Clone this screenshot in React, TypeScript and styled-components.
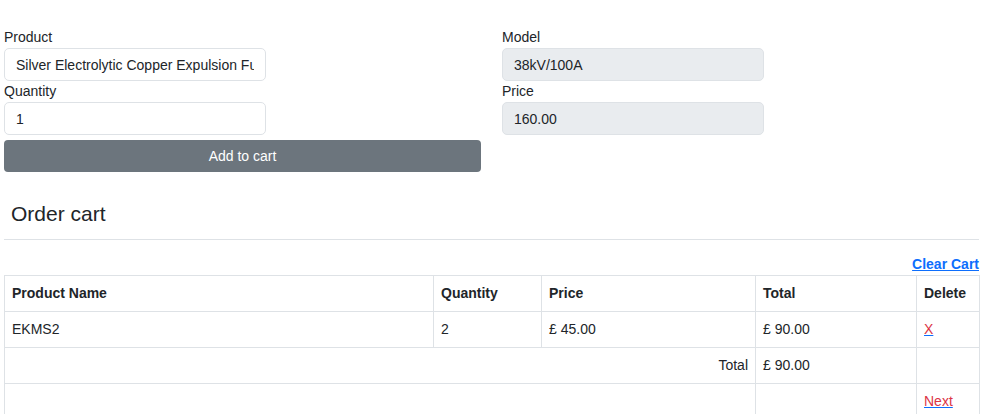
import React from "react";
import styled, { createGlobalStyle } from "styled-components";

const GlobalStyle = createGlobalStyle`
  html, body {
    margin: 0;
    padding: 0;
    background: #ffffff;
    font-family: "Liberation Sans", Arial, sans-serif;
    font-size: 14px;
    line-height: 21px;
    color: #212529;
  }
  * { box-sizing: border-box; }
`;

const Page = styled.div`
  width: 975px;
  margin-left: 4px;
  padding-top: 27px;
`;

const FormGrid = styled.div`
  display: grid;
  grid-template-columns: 477px 1fr;
  column-gap: 21px;
`;

const Column = styled.div`
  display: flex;
  flex-direction: column;
  align-items: flex-start;
`;

const Label = styled.label`
  display: block;
  font-size: 14px;
  line-height: 21px;
  color: #212529;
`;

const Input = styled.input<{ $readOnly?: boolean }>`
  width: 262px;
  height: 33px;
  padding: 0 11px;
  font-family: "Liberation Sans", Arial, sans-serif;
  font-size: 14px;
  color: #212529;
  border: 1px solid #dee2e6;
  border-radius: 5px;
  background: ${(p) => (p.$readOnly ? "#e9ecef" : "#ffffff")};
  outline: none;
`;

const AddButton = styled.button`
  width: 100%;
  height: 32px;
  margin-top: 5px;
  border: none;
  border-radius: 4px;
  background: #6c757d;
  color: #ffffff;
  font-family: "Liberation Sans", Arial, sans-serif;
  font-size: 14px;
  cursor: pointer;
`;

const Heading = styled.h2`
  margin: 29px 0 0;
  padding-left: 7px;
  font-size: 21px;
  font-weight: 400;
  line-height: 25px;
  color: #212529;
`;

const Rule = styled.hr`
  margin: 13px 0 0;
  border: none;
  border-top: 1px solid #dee2e6;
`;

const ActionBar = styled.div`
  display: flex;
  justify-content: flex-end;
  margin-top: 14px;
`;

const ClearLink = styled.a`
  font-weight: 700;
  color: #0d6efd;
  text-decoration: underline;
  cursor: pointer;
`;

const Table = styled.table`
  width: 975px;
  border-collapse: collapse;
  table-layout: fixed;
`;

const Cell = styled.td<{ $right?: boolean; $head?: boolean }>`
  border: 1px solid #dee2e6;
  padding: 7px 7px;
  height: 36px;
  font-weight: ${(p) => (p.$head ? 700 : 400)};
  text-align: ${(p) => (p.$right ? "right" : "left")};
  color: #212529;
  vertical-align: middle;
`;

const DangerLink = styled.a`
  color: #dc3545;
  text-decoration: underline;
  text-decoration-color: #0d6efd;
  cursor: pointer;
`;

export default function App() {
  return (
    <>
      <GlobalStyle />
      <Page>
        <FormGrid>
          <Column>
            <Label>Product</Label>
            <Input defaultValue="Silver Electrolytic Copper Expulsion Fuse" />
            <Label>Quantity</Label>
            <Input defaultValue="1" />
            <AddButton>Add to cart</AddButton>
          </Column>
          <Column>
            <Label>Model</Label>
            <Input $readOnly readOnly defaultValue="38kV/100A" />
            <Label>Price</Label>
            <Input $readOnly readOnly defaultValue="160.00" />
          </Column>
        </FormGrid>
        <Heading>Order cart</Heading>
        <Rule />
        <ActionBar>
          <ClearLink>Clear Cart</ClearLink>
        </ActionBar>
        <Table>
          <colgroup>
            <col style={{ width: 429 }} />
            <col style={{ width: 108 }} />
            <col style={{ width: 214 }} />
            <col style={{ width: 161 }} />
            <col style={{ width: 63 }} />
          </colgroup>
          <thead>
            <tr>
              <Cell as="th" $head>Product Name</Cell>
              <Cell as="th" $head>Quantity</Cell>
              <Cell as="th" $head>Price</Cell>
              <Cell as="th" $head>Total</Cell>
              <Cell as="th" $head>Delete</Cell>
            </tr>
          </thead>
          <tbody>
            <tr>
              <Cell>EKMS2</Cell>
              <Cell>2</Cell>
              <Cell>£ 45.00</Cell>
              <Cell>£ 90.00</Cell>
              <Cell>
                <DangerLink>X</DangerLink>
              </Cell>
            </tr>
            <tr>
              <Cell colSpan={3} $right>Total</Cell>
              <Cell>£ 90.00</Cell>
              <Cell />
            </tr>
            <tr>
              <Cell colSpan={3} />
              <Cell />
              <Cell>
                <DangerLink>Next</DangerLink>
              </Cell>
            </tr>
          </tbody>
        </Table>
      </Page>
    </>
  );
}
